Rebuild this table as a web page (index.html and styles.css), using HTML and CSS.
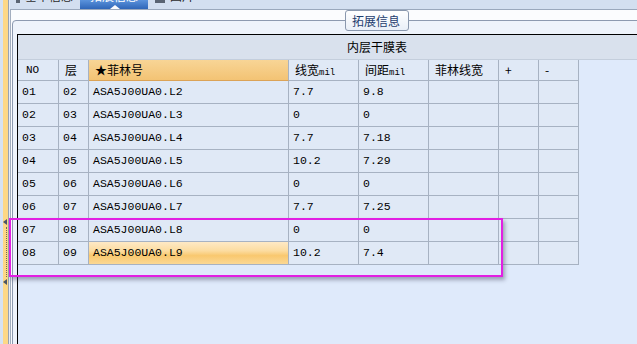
FILE: index.html
```html
<!DOCTYPE html>
<html lang="zh">
<head>
<meta charset="utf-8">
<title>内层干膜表</title>
<link rel="stylesheet" href="styles.css">
</head>
<body>
<div class="app">
  <aside class="side">
    <div class="grip">
      <span class="tri"></span>
      <span class="dots"></span>
      <span class="tri"></span>
    </div>
  </aside>
  <div class="main">
    <nav class="tabs">
      <div class="tab"><span class="ticon"></span><span class="tlabel">基本信息</span></div>
      <div class="tab active"><span class="tlabel">拓展信息</span><span class="pointer"></span></div>
      <div class="tab"><span class="ticon"></span><span class="tlabel">图片</span></div>
    </nav>
    <div class="panel">
      <fieldset class="group">
        <legend class="legend">拓展信息</legend>
        <div class="sheet">
          <div class="sheet-title">内层干膜表</div>
          <div class="grid">
            <div class="hc no">NO</div>
            <div class="hc">层</div>
            <div class="hc key">★菲林号</div>
            <div class="hc">线宽<span class="unit">mil</span></div>
            <div class="hc">间距<span class="unit">mil</span></div>
            <div class="hc">菲林线宽</div>
            <div class="hc">+</div>
            <div class="hc">-</div>

            <div class="c">01</div><div class="c">02</div><div class="c">ASA5J00UA0.L2</div><div class="c">7.7</div><div class="c">9.8</div><div class="c"></div><div class="c"></div><div class="c"></div>
            <div class="c">02</div><div class="c">03</div><div class="c">ASA5J00UA0.L3</div><div class="c">0</div><div class="c">0</div><div class="c"></div><div class="c"></div><div class="c"></div>
            <div class="c">03</div><div class="c">04</div><div class="c">ASA5J00UA0.L4</div><div class="c">7.7</div><div class="c">7.18</div><div class="c"></div><div class="c"></div><div class="c"></div>
            <div class="c">04</div><div class="c">05</div><div class="c">ASA5J00UA0.L5</div><div class="c">10.2</div><div class="c">7.29</div><div class="c"></div><div class="c"></div><div class="c"></div>
            <div class="c">05</div><div class="c">06</div><div class="c">ASA5J00UA0.L6</div><div class="c">0</div><div class="c">0</div><div class="c"></div><div class="c"></div><div class="c"></div>
            <div class="c">06</div><div class="c">07</div><div class="c">ASA5J00UA0.L7</div><div class="c">7.7</div><div class="c">7.25</div><div class="c"></div><div class="c"></div><div class="c"></div>
            <div class="c">07</div><div class="c">08</div><div class="c">ASA5J00UA0.L8</div><div class="c">0</div><div class="c">0</div><div class="c"></div><div class="c"></div><div class="c"></div>
            <div class="c">08</div><div class="c">09</div><div class="c sel">ASA5J00UA0.L9</div><div class="c">10.2</div><div class="c">7.4</div><div class="c"></div><div class="c"></div><div class="c"></div>
          </div>
        </div>
      </fieldset>
    </div>
  </div>
  <div class="mark"></div>
</div>
</body>
</html>
```
FILE: styles.css
```css
html, body {
  margin: 0;
  padding: 0;
}
body {
  width: 637px;
  height: 344px;
  overflow: hidden;
  background: #dce9fb;
  font-family: "Noto Sans CJK SC", "Liberation Sans", sans-serif;
  font-size: 12px;
  color: #000;
}
.app {
  position: relative;
  display: flex;
  width: 637px;
  height: 344px;
  overflow: hidden;
}
.side {
  flex: none;
  width: 10px;
  height: 344px;
  background: linear-gradient(to right, #d6e2f2 0 3px, #fdd886 3px 8px, #97a2b2 8px 9px, #e4ecf7 9px 10px);
}
.grip {
  display: flex;
  flex-direction: column;
  align-items: flex-start;
  padding-top: 219px;
}
.tri {
  width: 0;
  height: 0;
  margin-left: 3px;
  border-top: 3px solid transparent;
  border-bottom: 3px solid transparent;
  border-right: 4px solid #4b5566;
}
.dots {
  width: 0;
  height: 50px;
  margin: 2px 0 2px 6px;
  border-left: 1px dotted #6f6a5a;
}
.main {
  flex: 1;
  display: flex;
  flex-direction: column;
  min-width: 0;
}
.tabs {
  flex: none;
  height: 9px;
  display: flex;
  background: #d3dff0;
  border-bottom: 1px solid #9aa8bc;
  overflow: hidden;
}
.tab {
  display: flex;
  align-items: flex-start;
  gap: 5px;
  height: 9px;
  color: #2c2c2c;
  white-space: nowrap;
}
.tab:first-child {
  width: 64px;
  padding-left: 6px;
}
.tab.active {
  position: relative;
  width: 68px;
  justify-content: center;
  background: linear-gradient(#5b93dc, #2f66b8);
  color: #fff;
}
.tab:last-child {
  padding-left: 7px;
}
.tlabel {
  margin-top: -11px;
  line-height: 14px;
}
.ticon {
  width: 10px;
  height: 3px;
  margin-top: 0;
  background: #5a6473;
}
.tab:first-child .ticon {
  width: 4px;
}
.pointer {
  position: absolute;
  left: 30px;
  bottom: 0;
  width: 0;
  height: 0;
  border-left: 5px solid transparent;
  border-right: 5px solid transparent;
  border-bottom: 4px solid #fbfcfe;
}
.panel {
  flex: 1;
  display: flex;
  flex-direction: column;
  background: #fbfcfe;
  border-left: 1px solid #a3aebf;
  overflow: hidden;
}
.group {
  flex: 1;
  margin: 0 -20px -20px 1px;
  padding: 0 0 0 4px;
  min-width: 0;
  border: 1px solid #8d9ab0;
  border-radius: 4px 0 0 0;
  background: #eef3fb;
}
.legend {
  margin-left: 328px;
  padding: 0 8px 0 6px;
  height: 19px;
  line-height: 19px;
  border: 1px solid #8a98ae;
  border-radius: 3px;
  background: linear-gradient(#ffffff, #e9eff8);
  color: #1d3d6e;
  font-size: 12px;
}
.sheet {
  margin-top: 3px;
  min-height: 400px;
  border-top: 1px solid #000;
  border-left: 1px solid #000;
  background: #dfeafb;
}
.sheet-title {
  height: 24px;
  line-height: 24px;
  padding-left: 329px;
  background: #d9e1ed;
  border-bottom: 1px solid #c4cedc;
}
.grid {
  display: grid;
  grid-template-columns: 41px 30px 200px 70px 70px 70px 40px 40px;
  grid-auto-rows: auto;
}
.hc, .c {
  box-sizing: border-box;
  border-right: 1px solid #a7b2c2;
  border-bottom: 1px solid #a7b2c2;
  background: #e0e9f6;
  white-space: nowrap;
  overflow: hidden;
}
.hc {
  height: 21px;
  line-height: 20px;
  padding-left: 6px;
  font-size: 12px;
}
.hc.no {
  padding-left: 8px;
  font-family: "Liberation Mono", monospace;
  font-size: 11px;
}
.hc.key {
  background: linear-gradient(#f8d596, #f3c374);
  border-bottom-color: #dba357;
}
.unit {
  font-family: "Liberation Mono", monospace;
  font-size: 9px;
}
.c {
  height: 23px;
  line-height: 22px;
  padding-left: 4px;
  font-family: "Liberation Mono", monospace;
  font-size: 11.5px;
}
.c.sel {
  background: linear-gradient(#fee9c6 0%, #fcdca0 40%, #f9c86f 62%, #fbd894 100%);
}
.mark {
  position: absolute;
  left: 9px;
  top: 218px;
  width: 490px;
  height: 55px;
  border: 2px solid #e21fe2;
  box-shadow: 2px 3px 4px rgba(70, 70, 100, 0.45);
}
```
